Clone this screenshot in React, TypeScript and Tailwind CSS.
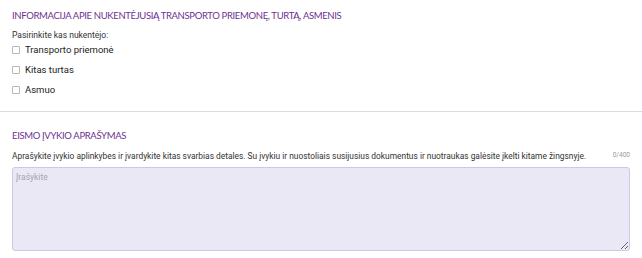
import React from "react";

function Check({ label }: { label: string }) {
  return (
    <label className="flex items-center h-[20px] gap-[5px]">
      <span className="w-[8px] h-[8px] border border-[#b8b8b8] rounded-[1px] bg-white" />
      <span className="text-[9.5px] text-[#222]">{label}</span>
    </label>
  );
}

export default function App() {
  return (
    <div className="w-[642px] h-[258px] bg-white font-['Roboto',sans-serif] overflow-hidden">
      <section className="px-[12px] pt-[9px] pb-[11px]">
        <h2 className="font-['Lato',sans-serif] text-[9.5px] text-[#6e3192] tracking-[-0.35px] leading-[14px]">
          INFORMACIJA APIE NUKENTĖJUSIĄ TRANSPORTO PRIEMONĘ, TURTĄ, ASMENIS
        </h2>
        <p className="mt-[7px] text-[8.5px] text-[#333] leading-[10px]">Pasirinkite kas nukentėjo:</p>
        <div className="flex flex-col">
          <Check label="Transporto priemonė" />
          <Check label="Kitas turtas" />
          <Check label="Asmuo" />
        </div>
      </section>
      <div className="h-px bg-[#dcdcdc]" />
      <section className="px-[12px] pt-[17px]">
        <h2 className="font-['Lato',sans-serif] text-[9.5px] text-[#6e3192] tracking-[-0.35px] leading-[14px]">
          EISMO ĮVYKIO APRAŠYMAS
        </h2>
        <div className="mt-[7px] flex items-center justify-between">
          <p className="text-[8.4px] text-[#333] leading-[12px]">
            Aprašykite įvykio aplinkybes ir įvardykite kitas svarbias detales. Su įvykiu ir nuostoliais susijusius dokumentus ir nuotraukas galėsite įkelti kitame žingsnyje.
          </p>
          <span className="text-[6.5px] text-[#999]">0/400</span>
        </div>
        <textarea
          placeholder="Įrašykite"
          className="mt-[5px] block w-full h-[84px] rounded-[3px] border border-[#cdc8e4] bg-[#ebe8f6] px-[3px] py-[3px] text-[8.5px] placeholder:text-[#a3a3b0] outline-none"
        />
      </section>
    </div>
  );
}
